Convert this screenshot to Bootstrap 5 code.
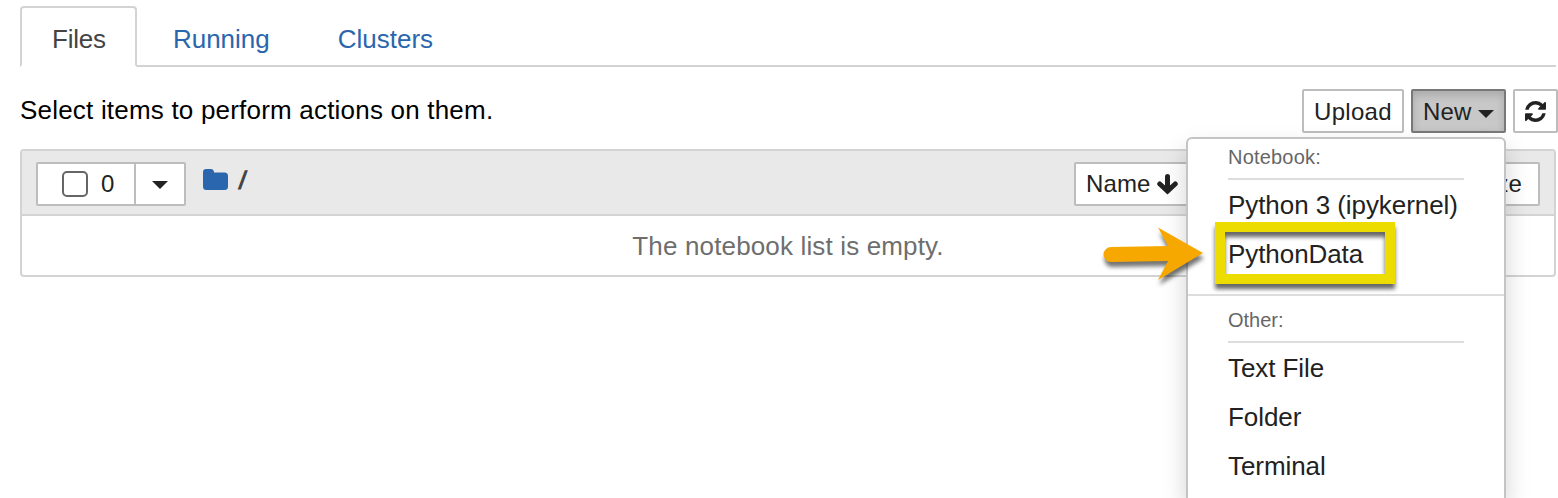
<!DOCTYPE html>
<html lang="en">
<head>
<meta charset="utf-8">
<title>Files</title>
<link href="https://cdn.jsdelivr.net/npm/bootstrap@5.3.0/dist/css/bootstrap.min.css" rel="stylesheet">
<style>
html{overflow:hidden}
body{font:26px/36px "Liberation Sans",sans-serif;color:#000;background:#fff;height:498px;overflow:hidden}
.page{padding:6px 0 0 20px}
.main-tabs{margin-right:2px;height:61px;border-bottom:2px solid #d3d3d3;gap:4px}
.main-tabs .nav-link{height:61px;padding:13px 30px 0 30px;border:2px solid transparent;border-radius:4px 4px 0 0;line-height:36px;color:#2a66ae;margin-bottom:-2px}
.main-tabs .nav-link.active{color:#444;border-color:#d3d3d3 #d3d3d3 #fff;background:#fff;letter-spacing:-.2px;padding-right:29px}
.toolbar{height:44px;margin-top:22px}
.toolbar .hint{line-height:42px;letter-spacing:.2px}
.tool{--bs-btn-font-size:24px;--bs-btn-padding-x:0;--bs-btn-padding-y:0;height:44px;border:2px solid #bdbdbd;border-radius:2px;background:#fff;color:#222;font-size:24px;line-height:40px;padding-top:1px;display:flex;align-items:center;white-space:nowrap;letter-spacing:.1px}
.tool.opened{background:#c8c8c8;border-color:#787878;color:#222;box-shadow:inset 0 4px 9px rgba(0,0,0,.16)}
.w-upload{width:102px;padding-left:10px;letter-spacing:.3px}
.w-new{width:95px;padding-left:10px;gap:7px}
.w-refresh{width:45px;justify-content:center}
.tri{width:0;height:0;border:8px solid transparent;border-top-color:currentColor;border-bottom:0;position:relative;top:2px}
.files{margin:16px 2px 0 0;border:2px solid #d3d3d3;border-radius:4px;height:128px}
.files-head{height:65px;background:#e9e9e9;border-bottom:2px solid #d3d3d3;padding:2px 14px 0}
.pick{width:100px;padding-left:24px;border-radius:2px 0 0 2px}
.pick .form-check-input{width:26px;height:26px;border:2px solid #666;border-radius:5px;margin:0;float:none}
.pick-menu{width:52px;margin-left:-2px;justify-content:center;border-radius:0 2px 2px 0}
.pick-menu .tri{top:1px}
.crumb{color:#444;font-weight:bold;margin:-8px 0 0 17px}
.crumb .sep{transform:skewX(-10deg);margin-left:3px;line-height:36px}
.empty{height:61px;line-height:60px;color:#6e6e6e;letter-spacing:.15px}
.w-name{width:119px;padding-left:10px;gap:7px}
.w-mod{width:204px}
.w-size{width:143px;padding-right:16px;justify-content:flex-end}
.new-menu{left:1186px;top:137px;width:320px;height:361px;border:2px solid #c4c4c4;border-bottom:0;border-radius:6px 6px 0 0;background:#fff;box-shadow:0 12px 24px rgba(0,0,0,.175);padding:0;display:block;font-size:26px;z-index:5}
.new-menu .group{font-size:20px;line-height:28px;height:41px;padding:4px 0 0;margin:0 40px;border-bottom:2px solid #ddd;color:#666;letter-spacing:.2px}
.new-menu .group.second{height:47px;padding-top:10px;letter-spacing:0}
.new-menu .dropdown-item{height:49px;line-height:50px;padding:0 40px;color:#222;letter-spacing:-.07px}
.new-menu .split{height:2px;background:#ddd;margin:16px 0 0}
.ring{left:1215px;top:222px;width:180px;height:62px;border:10px solid #eddc00;filter:drop-shadow(0 5px 2px rgba(0,0,0,.6));z-index:6}
.pointer{left:1095px;top:220px;z-index:6}
</style>
</head>
<body>
<div class="page">
  <ul class="nav nav-tabs main-tabs">
    <li class="nav-item"><a class="nav-link active" href="#">Files</a></li>
    <li class="nav-item"><a class="nav-link" href="#">Running</a></li>
    <li class="nav-item"><a class="nav-link" href="#">Clusters</a></li>
  </ul>
  <div class="toolbar d-flex justify-content-between">
    <div class="hint">Select items to perform actions on them.</div>
    <div class="d-flex" style="gap:7px">
      <button class="btn tool w-upload">Upload</button>
      <button class="btn tool opened w-new">New<span class="tri"></span></button>
      <button class="btn tool w-refresh" aria-label="Refresh"><svg width="21" height="21" viewBox="0 0 1536 1536" fill="currentColor"><path d="M1511 928q0 5-1 7-64 268-268 434.500T764 1536q-146 0-282.500-55T238 1324l-129 129q-19 19-45 19t-45-19-19-45V960q0-26 19-45t45-19h448q26 0 45 19t19 45-19 45l-137 137q71 66 161 102t187 36q134 0 250-65t186-179q11-17 53-117 8-23 30-23h192q13 0 22.500 9.500T1511 928zM1536 128v448q0 26-19 45t-45 19h-448q-26 0-45-19t-19-45 19-45l138-138Q969 256 768 256q-134 0-250 65T332 500q-11 17-53 117-8 23-30 23H50q-13 0-22.500-9.500T18 608v-7q65-268 270-434.500T768 0q146 0 284 55.500T1297 212l130-129q19-19 45-19t45 19 19 45z"/></svg></button>
    </div>
  </div>
  <div class="files">
    <div class="files-head d-flex align-items-center justify-content-between">
      <div class="d-flex align-items-center">
        <label class="tool pick gap-3"><input class="form-check-input" type="checkbox"><span style="margin-left:-3px">0</span></label>
        <button class="btn tool pick-menu" aria-label="Select"><span class="tri"></span></button>
        <div class="crumb d-flex align-items-center gap-2"><svg width="25" height="21" viewBox="0 0 25 21"><path fill="#2a66ae" d="M0 3.300Q0 0 3.300 0H7.700Q11 0 11 3.500H21.500Q25 3.500 25 7V17.500Q25 21 21.500 21H3.300Q0 21 0 17.500Z"/></svg><span class="sep">/</span></div>
      </div>
      <div class="d-flex">
        <button class="btn tool w-name">Name<svg width="21" height="21" viewBox="0 0 21 21" fill="none" stroke="currentColor" stroke-width="5" stroke-linecap="round" stroke-linejoin="miter"><path d="M10.500 2.500V16"/><path d="M2.800 10 10.500 17 18.200 10"/></svg></button>
        <button class="btn tool w-mod" aria-label="Last modified"></button>
        <button class="btn tool w-size">File size</button>
      </div>
    </div>
    <div class="empty text-center">The notebook list is empty.</div>
  </div>
</div>
<div class="dropdown-menu new-menu position-absolute show">
  <div class="group">Notebook:</div>
  <a class="dropdown-item" href="#">Python 3 (ipykernel)</a>
  <a class="dropdown-item" href="#">PythonData</a>
  <div class="split"></div>
  <div class="group second">Other:</div>
  <a class="dropdown-item" href="#">Text File</a>
  <a class="dropdown-item" href="#">Folder</a>
  <a class="dropdown-item" href="#">Terminal</a>
</div>
<div class="ring position-absolute"></div>
<svg class="pointer position-absolute" width="115" height="75" viewBox="0 0 115 75"><path fill="#f7a800" style="filter:drop-shadow(1px 5px 2px rgba(0,0,0,.55))" d="M16 27 73 26 63 7.500 108 33 63 60 73 41 16 42A7.500 7.500 0 0 1 16 27Z"/></svg>
<script src="https://cdn.jsdelivr.net/npm/bootstrap@5.3.0/dist/js/bootstrap.bundle.min.js"></script>
</body>
</html>
